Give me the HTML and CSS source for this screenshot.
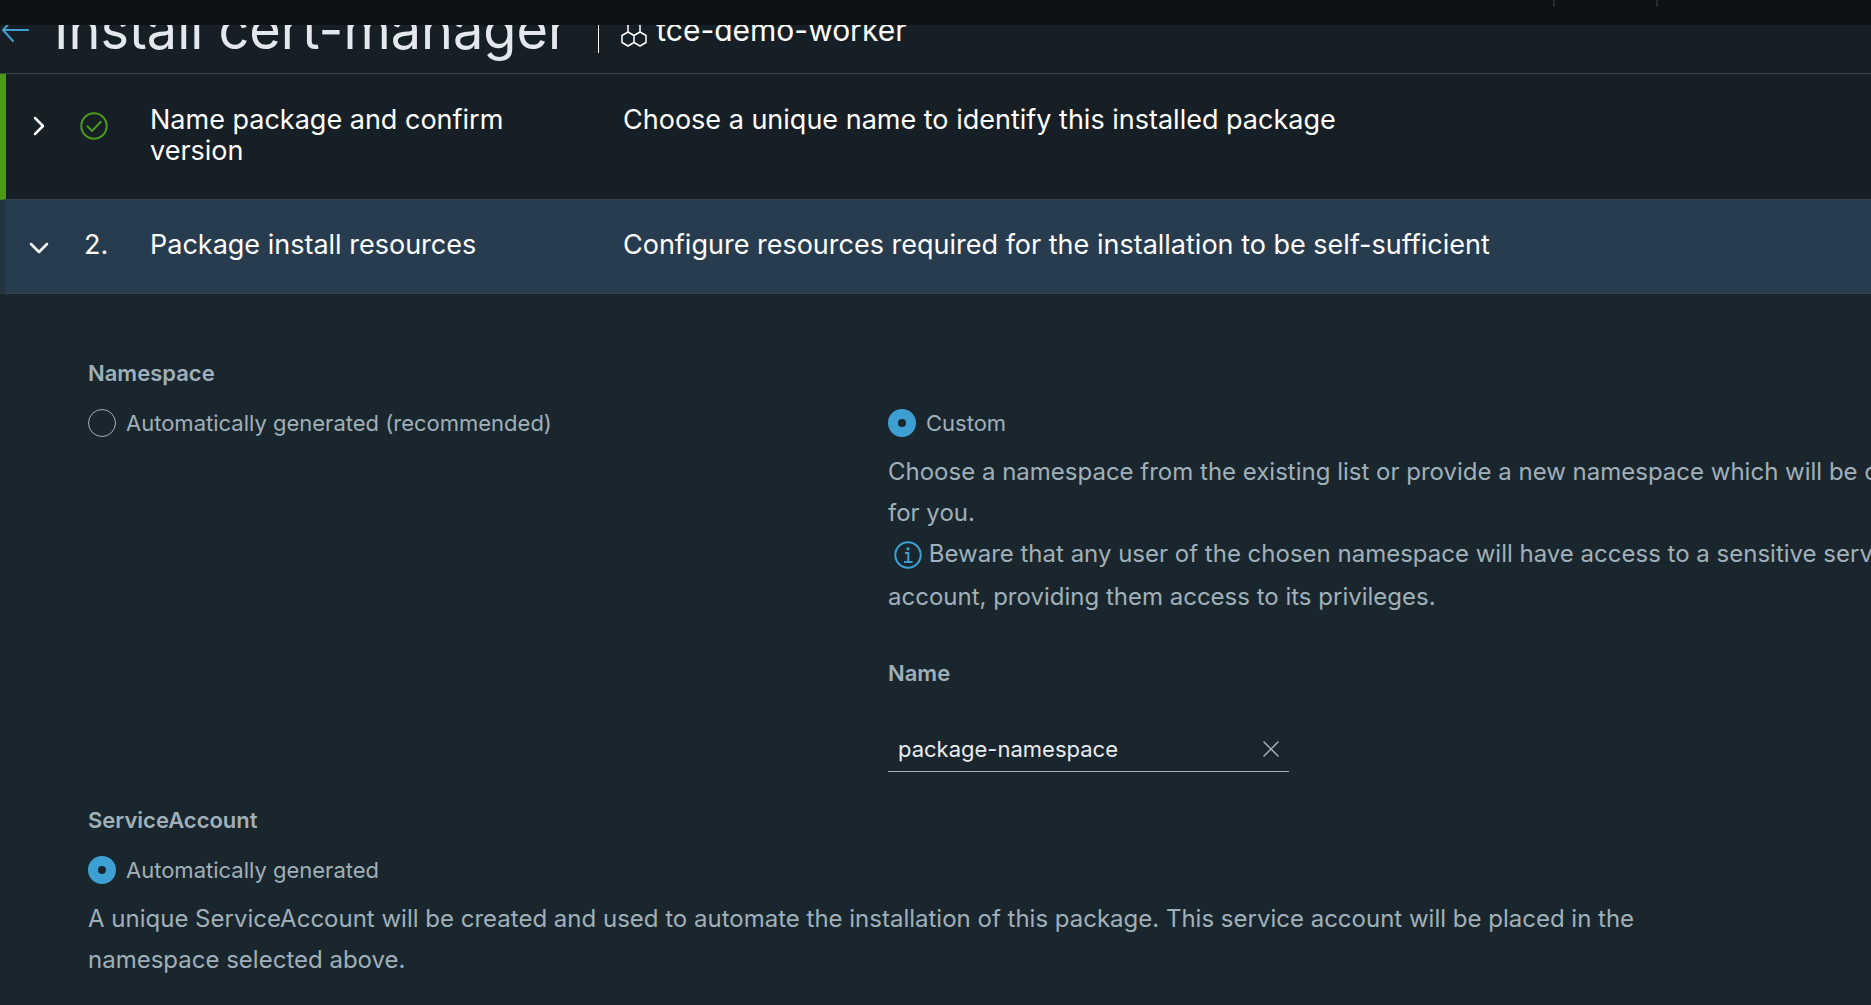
FILE: index.html
```html
<!DOCTYPE html>
<html lang="en">
<head>
<meta charset="utf-8">
<meta name="viewport" content="width=device-width, initial-scale=1">
<title>Install cert-manager</title>
<link rel="stylesheet" href="styles.css">
</head>
<body>
<div class="topbar"><span class="topbar-divider"></span><span class="topbar-divider"></span></div>

<header class="page-header">
  <a class="back" href="#" aria-label="Back">
    <svg width="30" height="28" viewBox="0 0 30 28" fill="none" stroke="currentColor" stroke-width="2" stroke-linecap="round" stroke-linejoin="round"><path d="M28 14H3M13 3L3 14l10 11"/></svg>
  </a>
  <h1>Install cert-manager</h1>
  <div class="cluster">
    <svg width="26" height="32" viewBox="0 0 26 32" fill="none" stroke="currentColor" stroke-width="1.5" stroke-linejoin="round"><path d="M7 17l6 3.500v7L7 31l-6-3.500v-7zM19 17l6 3.500v7L19 31l-6-3.500v-7zM7 17v-7l6-3.500 6 3.500v7"/></svg>
    <span>tce-demo-worker</span>
  </div>
</header>

<main>
  <section class="step step-complete">
    <button class="step-header" type="button" aria-expanded="false">
      <span class="marker"><svg width="20" height="20" viewBox="0 0 20 20" fill="none" stroke="currentColor" stroke-width="2.500" stroke-linecap="round" stroke-linejoin="round"><path d="M6 2l8 8-8 8"/></svg></span>
      <span class="marker status"><svg width="28" height="28" viewBox="0 0 28 28" fill="none" stroke="currentColor" stroke-width="2" stroke-linecap="round" stroke-linejoin="round"><circle cx="14" cy="14" r="12.700"/><path d="M7.500 14.200l4.500 4.800 8.800-9.200"/></svg></span>
      <span>Name package and confirm version</span>
      <span>Choose a unique name to identify this installed package</span>
    </button>
  </section>

  <section class="step step-active">
    <button class="step-header" type="button" aria-expanded="true">
      <span class="marker"><svg width="20" height="20" viewBox="0 0 20 20" fill="none" stroke="currentColor" stroke-width="2.500" stroke-linecap="round" stroke-linejoin="round"><path d="M2 6l8 8 8-8"/></svg></span>
      <span>2.</span>
      <span>Package install resources</span>
      <span>Configure resources required for the installation to be self-sufficient</span>
    </button>

    <form class="panel">
      <fieldset>
        <legend>Namespace</legend>
        <div class="columns">
          <label class="radio"><input type="radio" name="namespace"> Automatically generated (recommended)</label>
          <div class="option">
            <label class="radio"><input type="radio" name="namespace" checked> Custom</label>
            <p class="hint">Choose a namespace from the existing list or provide a new namespace which will be created<br>for you.<br><svg class="info" width="28" height="28" viewBox="0 0 28 28" fill="none" stroke="currentColor" stroke-width="2"><circle cx="14" cy="14" r="12.700"/><circle cx="14" cy="7.800" r="1.600" fill="currentColor" stroke="none"/><path d="M11 12h3.300v9M10 21h8.500"/></svg> Beware that any user of the chosen namespace will have access to a sensitive service<br>account, providing them access to its privileges.</p>
            <label class="field-label" for="ns-name">Name</label>
            <div class="field">
              <input id="ns-name" type="text" value="package-namespace">
              <button class="clear" type="button" aria-label="Clear"><svg width="18" height="18" viewBox="0 0 18 18" fill="none" stroke="currentColor" stroke-width="1.500" stroke-linecap="round"><path d="M2 2l14 14M16 2L2 16"/></svg></button>
            </div>
          </div>
        </div>
      </fieldset>

      <fieldset>
        <legend>ServiceAccount</legend>
        <div class="option">
          <label class="radio"><input type="radio" name="service-account" checked> Automatically generated</label>
          <p class="hint">A unique ServiceAccount will be created and used to automate the installation of this package. This service account will be placed in the<br>namespace selected above.</p>
        </div>
      </fieldset>
    </form>
  </section>
</main>
</body>
</html>
```
FILE: styles.css
```css
* {
  box-sizing: border-box;
}

body {
  margin: 0;
  background: #1a262e;
  color: #a0b0b9;
  font-family: Inter, "Noto Sans", sans-serif;
  font-size: 22px;
  line-height: 28px;
  overflow: hidden;
}

button,
input {
  font: inherit;
  color: inherit;
}

svg {
  display: block;
}

.topbar {
  position: fixed;
  inset: 0 0 auto;
  z-index: 1;
  height: 25px;
  padding-right: 213px;
  display: flex;
  justify-content: flex-end;
  gap: 101px;
  background: #0d1214;
}

.topbar-divider {
  width: 2px;
  height: 7px;
  background: #262c30;
}

.page-header {
  display: flex;
  align-items: center;
  padding-bottom: 13px;
  border-bottom: 1px solid #3a454c;
  background: #171f26;
  color: #fff;
}

.back {
  margin-right: 24px;
  color: #3e9fd2;
}

h1 {
  margin: 0;
  color: #e4e8ed;
  font-size: 54px;
  font-weight: 400;
  line-height: 60px;
}

.cluster {
  display: flex;
  align-items: center;
  gap: 9px;
  height: 46px;
  margin-left: 30px;
  padding-left: 22px;
  border-left: 1px solid #fff;
  font-size: 30px;
}

.cluster svg {
  margin-bottom: -2px;
}

.step-header {
  display: grid;
  grid-template-columns: 55px 66px 400px 1fr;
  align-items: start;
  width: 100%;
  padding: 29px 0 33px 23px;
  border: 0;
  border-bottom: 1px solid #37444d;
  border-left: 6px solid;
  background: #171f26;
  color: #fff;
  font-size: 27px;
  line-height: 31px;
  text-align: left;
}

.step-header span:last-child {
  margin-left: 73px;
}

.step-complete .step-header {
  padding-top: 30px;
  border-left-color: #4a9a18;
}

.step-active .step-header {
  border-left-color: #22343d;
  background: #283c50;
}

.marker {
  padding-top: 9px;
}

.step-complete .marker {
  padding-top: 12px;
}

.step-complete .status {
  padding-top: 8px;
  margin-left: -4px;
  color: #4a9a18;
}

.panel {
  display: grid;
  gap: 34px;
  padding: 65px 0 0 88px;
}

fieldset {
  min-width: 0;
  margin: 0;
  padding: 0;
  border: 0;
}

legend,
.field-label {
  padding: 0;
  font-weight: 600;
}

legend {
  margin-bottom: 22px;
}

.columns {
  display: grid;
  grid-template-columns: 800px 1fr;
  align-items: start;
}

.radio {
  display: flex;
  align-items: center;
  gap: 10px;
}

.radio input {
  appearance: none;
  width: 28px;
  height: 28px;
  margin: 0;
  border: 1px solid #a0b0b9;
  border-radius: 50%;
}

.radio input:checked {
  border: 10px solid #3e9fd2;
}

.hint {
  margin: 14px 0 0;
  font-size: 24px;
  line-height: 41px;
  white-space: nowrap;
}

.info {
  display: inline-block;
  margin: 0 0 7px 6px;
  vertical-align: -14px;
  color: #3e9fd2;
}

.field-label {
  display: block;
  margin: 42px 0 40px;
}

.field {
  display: flex;
  align-items: center;
  width: 401px;
  height: 45px;
  padding: 0 9px 0 10px;
  border-bottom: 1px solid #a0b0b9;
}

.field input {
  flex: 1;
  min-width: 0;
  padding: 0;
  border: 0;
  outline: 0;
  background: none;
  color: #e9ecef;
}

.clear {
  padding: 0;
  border: 0;
  background: none;
}
```
